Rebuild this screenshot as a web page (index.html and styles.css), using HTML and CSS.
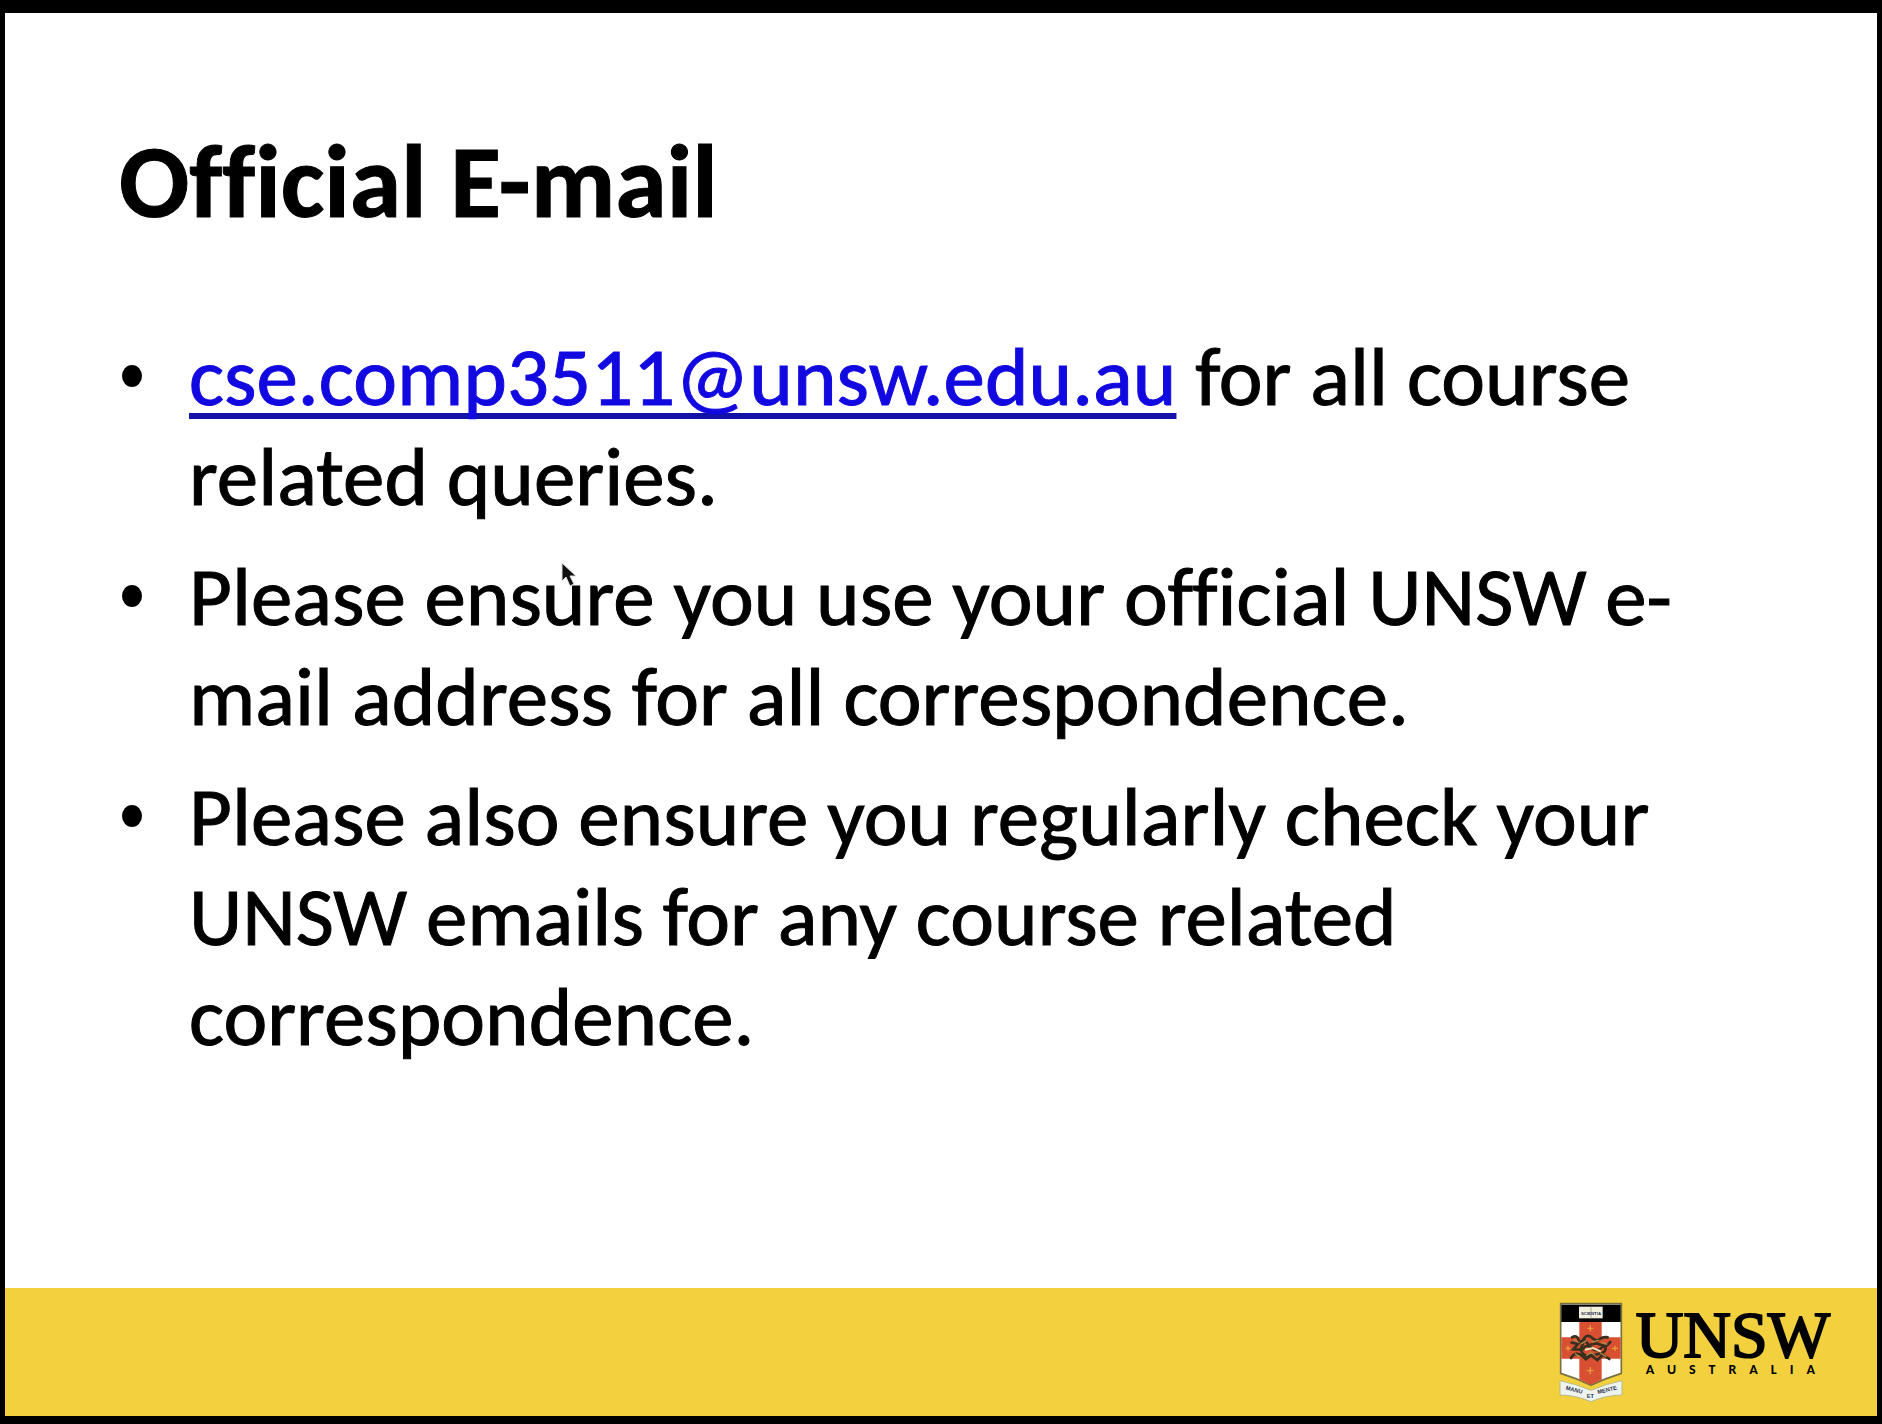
FILE: index.html
```html
<!DOCTYPE html>
<html lang="en">
<head>
<meta charset="utf-8">
<title>Official E-mail</title>
<link rel="stylesheet" href="styles.css">
</head>
<body>
<main class="slide">
  <section class="content">
    <h1 class="title">Official E-mail</h1>
    <ul class="points">
      <li><a class="mail" href="mailto:cse.comp3511@unsw.edu.au">cse.comp3511@unsw.edu.au</a> for all course related queries.</li>
      <li>Please ensure you use your official UNSW e-mail address for all correspondence.</li>
      <li>Please also ensure you regularly check your UNSW emails for any course related correspondence.</li>
    </ul>
  </section>
  <footer class="band">
    <svg class="crest" viewBox="60 68 190 300" role="img" aria-label="UNSW crest">
      <path d="M64 73H246V282Q200 296 155 318Q110 296 64 282Z" fill="#fff" stroke="#77703f" stroke-width="5"/>
      <path d="M66 76H244V128H66Z" fill="#000"/>
      <path d="M120 128H187V301L155 316L120 300ZM66 174H244V238H66Z" fill="#d94f32"/>
      <path d="M119 82H155L190 82V117H155L119 117Z" fill="#f1f0df"/>
      <path d="M155 82V117" stroke="#aaa98e" stroke-width="3"/>
      <text x="155" y="106" class="crest-book">SCIENTIA</text>
      <g fill="none" stroke="#e79a3c" stroke-width="4">
        <path d="M153 138v18M144 147h18M153 264v20M143 274h20M78 207h16M86 199v16M218 207h18M227 199v16"/>
      </g>
      <g fill="none" stroke="#38301e" stroke-linecap="round" stroke-width="8">
        <path d="M98 174q14-8 20 7t18-6q10-12 24 2l14 8q14-14 31-11"/>
        <path d="M97 190l19 4-14 16 21 1 13-29 13 15 21-5 30 9 13-13"/>
        <path d="M95 236q10-18 29-10l16 14 15-12 19 14 17-16 19 13"/>
        <path d="M126 215q15-25 31-9t35-6q15 10-3 21l-34 8q-22 5-29-14"/>
      </g>
      <g fill="none" stroke="#b08a49" stroke-linecap="round" stroke-width="4">
        <path d="M104 181l12 7M127 193l14-9M160 188l19-5M188 190l14 4M108 224l12 7M142 228q12-14 25 0M183 221l17 10"/>
      </g>
      <path d="M137 211l24-5 23 10" fill="none" stroke="#eee3bd" stroke-width="6"/>
      <path d="M62 304Q108 313 155 333Q202 313 248 304V347Q198 348 155 367Q110 348 62 347Z" fill="#eef3ee" stroke="#b6ba88" stroke-width="3"/>
      <text x="103" y="337" class="crest-motto" transform="rotate(14 103 337)">MANU</text>
      <text x="153" y="355" class="crest-motto">ET</text>
      <text x="205" y="337" class="crest-motto" transform="rotate(-14 205 337)">MENTE</text>
    </svg>
    <div class="brand">
      <span class="brand-name">UNSW</span>
      <span class="brand-country">AUSTRALIA</span>
    </div>
  </footer>
  <svg class="pointer" viewBox="0 0 18 26" aria-hidden="true">
    <path d="M2 1V19L6 15L10 24L14 22L10 14H16Z" fill="#111" stroke="#ddd" stroke-width="1"/>
  </svg>
</main>
</body>
</html>
```
FILE: styles.css
```css
* {
  box-sizing: border-box;
}

body {
  margin: 0;
  min-height: 100vh;
  display: flex;
  padding: 13px 5px 8px;
  background: #000;
  color: #000;
  font-family: Carlito, Lato, sans-serif;
  font-variant-ligatures: none;
}

.slide {
  position: relative;
  flex: 1;
  display: flex;
  flex-direction: column;
  background: #fff;
}

.content {
  flex: 1;
  padding: 109px 100px 40px 114px;
}

.title {
  margin: 0 0 85px;
  font-size: 104px;
  line-height: 120px;
  font-weight: 700;
  -webkit-text-stroke: 1px currentColor;
}

.points {
  display: flex;
  flex-direction: column;
  gap: 20px;
  margin: 0;
  padding: 0;
  list-style: none;
  font-size: 83px;
  line-height: 100px;
  -webkit-text-stroke: 1px currentColor;
}

.points li {
  position: relative;
  padding-left: 70px;
}

.points li::before {
  content: "";
  position: absolute;
  left: 3px;
  top: 38px;
  width: 20px;
  height: 22px;
  border-radius: 50%;
  background: #000;
}

.mail {
  color: #1208e0;
  text-decoration: underline;
  text-decoration-color: #1212a8;
  text-decoration-thickness: 6px;
  text-underline-offset: 8px;
  text-decoration-skip-ink: none;
}

.band {
  display: flex;
  justify-content: flex-end;
  align-items: flex-start;
  gap: 13px;
  min-height: 128px;
  padding: 14px 47px 12px;
  background: #f3d13e;
}

.crest {
  width: 64px;
  height: 100px;
}

.crest-book,
.crest-motto {
  font-family: "Liberation Sans", sans-serif;
  font-weight: 700;
  text-anchor: middle;
  fill: #28334f;
}

.crest-book {
  font-size: 13px;
}

.crest-motto {
  font-size: 17px;
}

.brand {
  display: flex;
  flex-direction: column;
  align-items: center;
  padding-top: 4px;
}

.brand-name {
  font-family: "Liberation Serif", serif;
  font-size: 66px;
  line-height: 58px;
  -webkit-text-stroke: 2px #000;
}

.brand-country {
  padding-left: 8px;
  font-size: 14px;
  font-weight: 700;
  line-height: 12px;
  letter-spacing: 13px;
}

.pointer {
  position: absolute;
  left: 555px;
  top: 549px;
  width: 18px;
  height: 26px;
}
```
